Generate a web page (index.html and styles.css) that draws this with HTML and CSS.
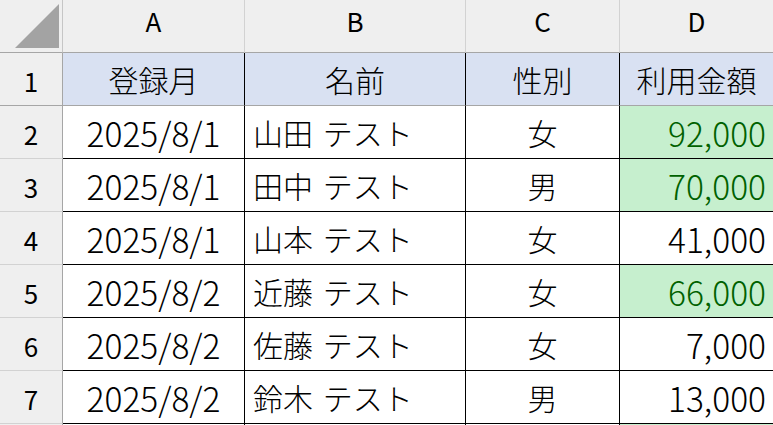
FILE: index.html
```html
<!DOCTYPE html>
<html lang="ja">
<head>
<meta charset="utf-8">
<title>Sheet</title>
<link rel="stylesheet" href="styles.css">
</head>
<body>
<div class="sheet">
  <div class="corner"><svg class="tri" width="44" height="44" viewBox="0 0 44 44"><polygon points="0,44 44,44 44,0" fill="#a3a3a3"/></svg></div>
  <div class="colhead">A</div>
  <div class="colhead">B</div>
  <div class="colhead">C</div>
  <div class="colhead">D</div>

  <div class="rowhead first">1</div>
  <div class="cell hdr first c">登録月</div>
  <div class="cell hdr first c">名前</div>
  <div class="cell hdr first c">性別</div>
  <div class="cell hdr first c">利用金額</div>

  <div class="rowhead">2</div>
  <div class="cell c num">2025/8/1</div>
  <div class="cell l">山田 テスト</div>
  <div class="cell c">女</div>
  <div class="cell r num hl">92,000</div>

  <div class="rowhead">3</div>
  <div class="cell c num">2025/8/1</div>
  <div class="cell l">田中 テスト</div>
  <div class="cell c">男</div>
  <div class="cell r num hl">70,000</div>

  <div class="rowhead">4</div>
  <div class="cell c num">2025/8/1</div>
  <div class="cell l">山本 テスト</div>
  <div class="cell c">女</div>
  <div class="cell r num">41,000</div>

  <div class="rowhead">5</div>
  <div class="cell c num">2025/8/2</div>
  <div class="cell l">近藤 テスト</div>
  <div class="cell c">女</div>
  <div class="cell r num hl">66,000</div>

  <div class="rowhead">6</div>
  <div class="cell c num">2025/8/2</div>
  <div class="cell l">佐藤 テスト</div>
  <div class="cell c">女</div>
  <div class="cell r num">7,000</div>

  <div class="rowhead">7</div>
  <div class="cell c num">2025/8/2</div>
  <div class="cell l">鈴木 テスト</div>
  <div class="cell c">男</div>
  <div class="cell r num">13,000</div>

  <div class="rowhead"></div>
  <div class="cell"></div>
  <div class="cell"></div>
  <div class="cell"></div>
  <div class="cell hl"></div>
</div>
</body>
</html>
```

FILE: styles.css
```css
html, body {
  margin: 0;
  padding: 0;
  overflow: hidden;
  background: #ffffff;
}

.sheet {
  display: grid;
  grid-template-columns: 63px 182px 221px 154px 154px;
  grid-auto-rows: 53px;
  width: 774px;
  font-family: "Noto Sans CJK JP", "Noto Sans", sans-serif;
  font-weight: 300;
  color: #000;
}

.sheet > div {
  box-sizing: border-box;
  display: flex;
  align-items: center;
  overflow: hidden;
  white-space: nowrap;
}

.corner {
  background: #efefef;
  border-right: 1px solid #c6c6c6;
  border-bottom: 1px solid #a6a6a6;
  justify-content: flex-end;
  align-items: flex-end !important;
  padding: 0 3px 4px 0;
}

.tri {
  display: block;
}

.colhead {
  background: #efefef;
  border-right: 1px solid #d2d2d2;
  border-bottom: 1px solid #a6a6a6;
  justify-content: center;
  font-size: 26px;
  font-weight: 400;
  padding-bottom: 12px;
}

.rowhead {
  background: #efefef;
  border-right: 1px solid #a6a6a6;
  border-bottom: 1px solid #d2d2d2;
  justify-content: center;
  font-size: 26px;
  font-weight: 400;
  padding-top: 3px;
}

.rowhead.first {
  border-bottom-color: #a6a6a6;
}

.cell {
  border-right: 1px solid #000;
  border-bottom: 1px solid #000;
  font-size: 30px;
}

.cell.num {
  font-size: 33.5px;
}

.cell.first {
  border-bottom-color: #a6a6a6;
}

.hdr {
  background: #d9e1f2;
}

.hl {
  background: #c6efce;
  color: #006100;
}

.c {
  justify-content: center;
}

.l {
  justify-content: flex-start;
  padding-left: 8px;
  word-spacing: 3px;
}

.r {
  justify-content: flex-end;
  padding-right: 7px;
}
```
